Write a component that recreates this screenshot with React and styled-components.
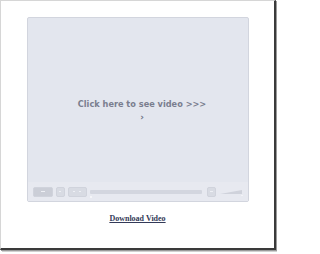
import React from "react";
import styled, { createGlobalStyle } from "styled-components";

const Global = createGlobalStyle`
  html, body { margin: 0; padding: 0; background: #ffffff; }
  body { width: 277px; height: 254px; overflow: hidden; }
`;

const Frame = styled.div`
  box-sizing: border-box;
  width: 276px;
  height: 250px;
  background: #ffffff;
  border-top: 1px solid #d6d6d6;
  border-left: 1px solid #d6d6d6;
  border-right: 2px solid #3a3a3a;
  border-bottom: 2px solid #3a3a3a;
  box-shadow: 1px 1px 0 #9a9a9a, 2px 2px 0 #d0d0d0;
  display: flex;
  flex-direction: column;
  align-items: center;
  padding-top: 16px;
`;

const Player = styled.div`
  box-sizing: border-box;
  width: 222px;
  height: 185px;
  border: 1px solid #d2d5de;
  border-radius: 2px;
  background: #e3e6ee;
  display: flex;
  flex-direction: column;
`;

const Screen = styled.div`
  flex: 1;
  display: flex;
  flex-direction: column;
  align-items: center;
  padding-top: 81px;
  padding-left: 9px;
  box-sizing: border-box;
  cursor: pointer;
`;

const Caption = styled.div`
  font-family: "DejaVu Sans", Verdana, sans-serif;
  font-weight: bold;
  font-size: 8.2px;
  line-height: 10px;
  color: #7a7e8f;
  white-space: nowrap;
`;

const Pointer = styled.div`
  font-family: "DejaVu Sans", sans-serif;
  font-weight: bold;
  font-size: 9px;
  line-height: 8px;
  color: #6f7384;
  margin-top: 4px;
  margin-left: 0px;
`;

const Controls = styled.div`
  height: 19px;
  background: #e7e9f0;
  display: flex;
  align-items: center;
  padding: 0 5px;
  gap: 3px;
`;

const Btn = styled.div`
  box-sizing: border-box;
  width: ${(p) => p.$w}px;
  height: 10px;
  border-radius: 2px;
  background: ${(p) => (p.$dark ? "#cbced7" : "#d8dbe3")};
  border: 1px solid #d0d3dc;
  display: flex;
  align-items: center;
  justify-content: center;
  gap: 4px;
  margin-left: ${(p) => p.$ml || 0}px;
`;

const Dot = styled.span`
  width: ${(p) => p.$w || 2}px;
  height: 1px;
  background: #eef0f5;
`;

const Track = styled.div`
  position: relative;
  flex: 1;
  height: 4px;
  background: #d3d6df;
  border-radius: 1px;
  margin-right: 1px;
`;

const Knob = styled.span`
  position: absolute;
  left: 0;
  top: 6px;
  width: 2px;
  height: 2px;
  background: #f4f5f8;
`;

const Volume = styled.svg`
  display: block;
  margin-left: 1px;
`;

const Link = styled.a`
  margin-top: 12px;
  font-family: "Liberation Serif", "Times New Roman", serif;
  font-weight: bold;
  font-size: 8px;
  line-height: 10px;
  color: #333a58;
  text-decoration: underline;
  &:visited { color: #333a58; }
`;

export default function App() {
  return (
    <>
      <Global />
      <Frame>
        <Player>
          <Screen>
            <Caption>Click here to see video &gt;&gt;&gt;</Caption>
            <Pointer>›</Pointer>
          </Screen>
          <Controls>
            <Btn $w={20} $dark>
              <Dot $w={4} />
            </Btn>
            <Btn $w={9}>
              <Dot $w={2} />
            </Btn>
            <Btn $w={19}>
              <Dot />
              <Dot />
            </Btn>
            <Track>
              <Knob />
            </Track>
            <Btn $w={9} $ml={1}>
              <Dot $w={3} />
            </Btn>
            <Volume width="23" height="10" viewBox="0 0 23 10">
              <polygon points="0,7 22,3 22,7" fill="#cfd2db" />
              <rect x="21" y="8" width="2" height="1" fill="#f2f3f7" />
            </Volume>
          </Controls>
        </Player>
        <Link href="#">Download Video</Link>
      </Frame>
    </>
  );
}
